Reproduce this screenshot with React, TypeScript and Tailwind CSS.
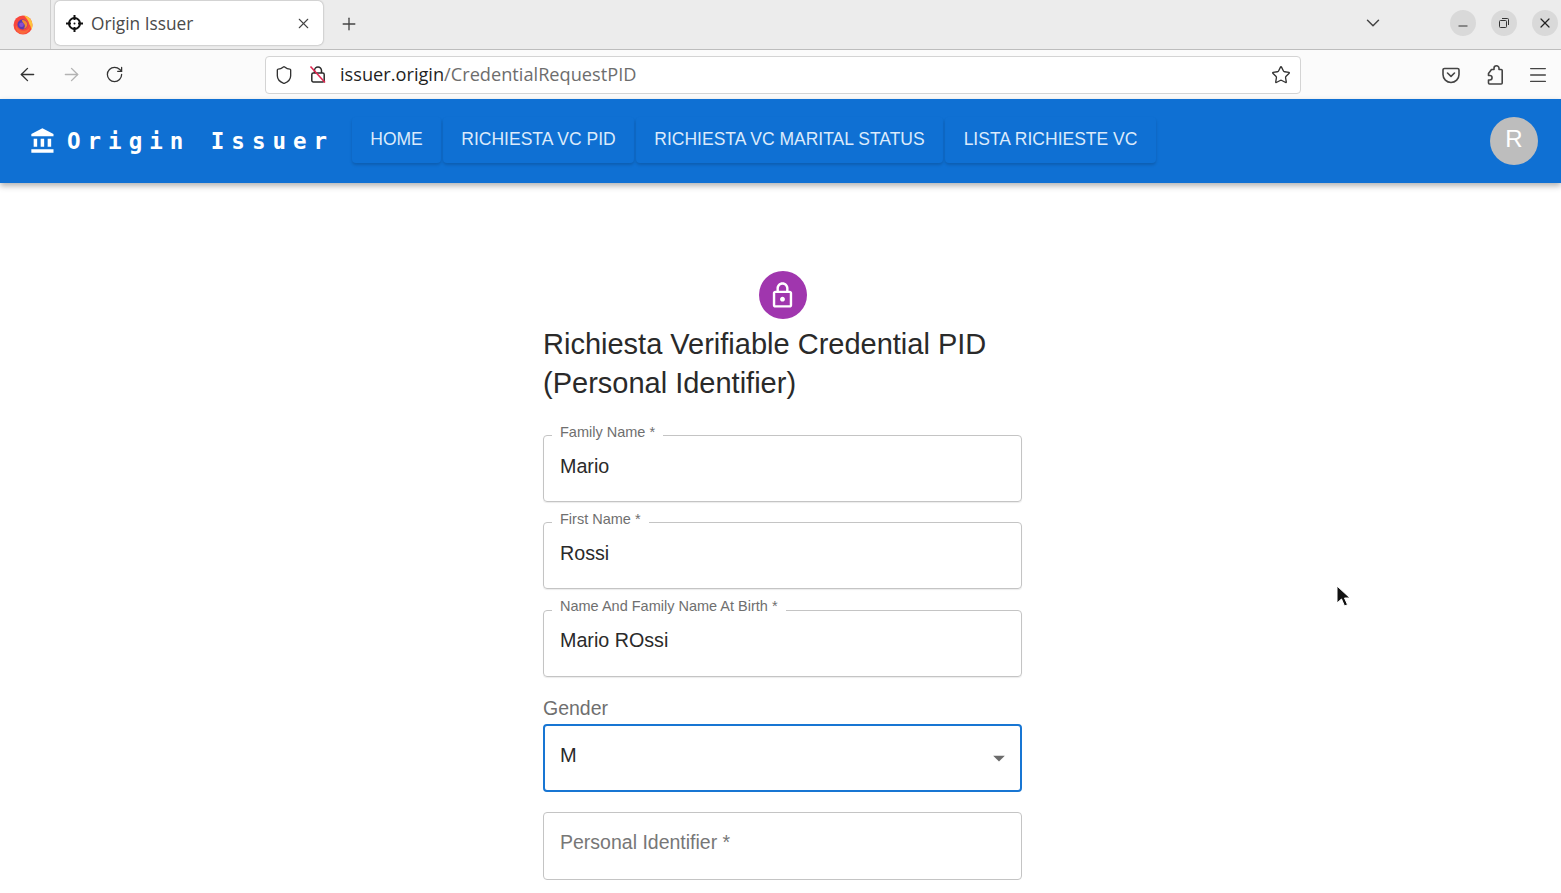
import React from 'react';
import { ArrowLeft, ArrowRight, RotateCw, Shield, Star, Menu, ChevronDown, Plus, X, Minus } from 'lucide-react';

const navItems = [
  { label: 'HOME', w: 'w-[89px]' },
  { label: 'RICHIESTA VC PID', w: 'w-[191px]' },
  { label: 'RICHIESTA VC MARITAL STATUS', w: 'w-[307px]' },
  { label: 'LISTA RICHIESTE VC', w: 'w-[211px]' },
];

function FirefoxLogo() {
  return (
    <svg width="20" height="20" viewBox="0 0 20 20">
      <circle cx="10" cy="10" r="9.500" fill="#f8463c" />
      <path d="M11 .5c4.500.4 8.500 4.300 8.500 9.500 0 2-.5 3.500-1.300 4.800-.2-2.200-.7-4-1.700-5.300C15.500 5.500 13.500 3 11 .5z" fill="#ffc23a" />
      <path d="M3 10c1.500 4.500 5.500 6.500 9.500 5.500 2-.5 3.500-2 4.500-4-.2 3.800-3.500 7.500-7.500 7.500S2 15 3 10z" fill="#f9673a" />
      <circle cx="9.500" cy="9.500" r="5" fill="#5b3bb0" />
      <path d="M9 5c2.500-.5 5 1.300 5.300 4 .3 2.500-1.500 4.500-3.800 4.800 1.500-1.300 1.800-3.300.7-4.800C10.300 7.800 9 7 9 5z" fill="#f58a2e" />
      <circle cx="8.500" cy="9.800" r="2.300" fill="#8a4fd0" />
    </svg>
  );
}

function Crosshair() {
  return (
    <svg width="17" height="17" viewBox="0 0 17 17" fill="none" stroke="#111" strokeWidth="2">
      <circle cx="8.500" cy="8.500" r="5.500" />
      <path d="M8.500 0v5M8.500 12v5M0 8.500h5M12 8.500h5" />
      <circle cx="8.500" cy="8.500" r="1" fill="#111" stroke="none" />
    </svg>
  );
}

function BrokenLock() {
  return (
    <svg width="18" height="19" viewBox="0 0 18 19" fill="none">
      <path d="M5.500 8V5.500a3.500 3.500 0 0 1 7 0V8" stroke="#2b2b2b" strokeWidth="1.500" />
      <rect x="2.800" y="8" width="12.400" height="9" rx="1.500" stroke="#2b2b2b" strokeWidth="1.500" />
      <path d="M1.500 1.500 16 17.500" stroke="#e0254f" strokeWidth="1.600" />
    </svg>
  );
}

function Pocket() {
  return (
    <svg width="18" height="18" viewBox="0 0 18 18" fill="none" stroke="#444" strokeWidth="1.600">
      <path d="M2.500 2.500h13a1.500 1.500 0 0 1 1.500 1.500v4.500a8 8 0 0 1-16 0V4a1.500 1.500 0 0 1 1.500-1.500z" />
      <path d="M5.500 7 9 10.300 12.500 7" strokeLinecap="round" strokeLinejoin="round" />
    </svg>
  );
}

function Extensions() {
  return (
    <svg width="18" height="20" viewBox="0 0 18 20" fill="none" stroke="#444" strokeWidth="1.600" strokeLinejoin="round">
      <path d="M8 4.500V3.300a2.500 2.500 0 0 1 5 0v1.200h2.200c.6 0 1 .4 1 1V18c0 .6-.4 1-1 1H3.500c-.6 0-1-.4-1-1v-3h1.300a2.200 2.200 0 0 0 0-4.500H2.500V8.500l3-4z" />
    </svg>
  );
}

function RestoreIcon() {
  return (
    <svg width="10" height="10" viewBox="0 0 10 10" fill="none" stroke="#333" strokeWidth="1">
      <rect x=".5" y="2.500" width="7" height="7" rx="1" />
      <path d="M3 .5h5.500a1 1 0 0 1 1 1V7" />
    </svg>
  );
}

function TextField({ label, value, low }: { label: string; value: string; low?: boolean }) {
  return (
    <div className={`relative h-[67px] rounded border border-[#c4c4c4] pl-4 shadow-[0_1px_1px_rgba(0,0,0,0.08)] ${low ? 'mt-px pt-[16px]' : 'pt-[17px]'}`}>
      <span className={`absolute left-[8px] bg-white px-2 text-[14.500px] leading-[20px] text-[#6f6f6f] ${low ? '-top-[15px]' : '-top-[14px]'}`}>{label}</span>
      <span className="text-[19.700px] leading-[27px] text-[#2a2a2a]">{value}</span>
    </div>
  );
}

export default function App() {
  return (
    <div className="relative flex h-[893px] w-full flex-col overflow-hidden bg-white font-['Liberation_Sans',sans-serif]">
      {/* tab strip */}
      <div className="flex h-[50px] flex-none items-center border-b border-[#bdbdbd] bg-[#ececec] pb-[3px]">
        <div className="flex h-[49px] w-[51px] flex-none items-center justify-center self-start border-r border-[#cfcfcf] pr-[5px]">
          <FirefoxLogo />
        </div>
        <div className="ml-1 flex h-[44px] w-[268px] flex-none items-center rounded-[5px] bg-white pl-[11px] pr-[11px] shadow-[0_0_2px_rgba(0,0,0,0.4)]">
          <Crosshair />
          <span className="ml-2 mt-[2px] font-['Open_Sans',sans-serif] text-[17.300px] text-[#4a4a4a]">Origin Issuer</span>
          <X size={17} strokeWidth={1.500} className="ml-auto text-[#444]" />
        </div>
        <Plus size={20} strokeWidth={1.600} className="ml-4 mt-[2px] text-[#444]" />
        <ChevronDown size={22} strokeWidth={1.600} className="ml-[1003px] text-[#444]" />
        <div className="ml-[66px] flex items-center gap-[15px]">
          <div className="flex h-[26px] w-[26px] items-center justify-center rounded-full bg-[#d9d9d9]">
            <Minus size={14} strokeWidth={1.700} className="mt-[5px] text-[#333]" />
          </div>
          <div className="flex h-[26px] w-[26px] items-center justify-center rounded-full bg-[#d9d9d9]">
            <RestoreIcon />
          </div>
          <div className="flex h-[26px] w-[26px] items-center justify-center rounded-full bg-[#d9d9d9]">
            <X size={16} strokeWidth={1.800} className="text-[#222]" />
          </div>
        </div>
      </div>

      {/* url bar */}
      <div className="flex h-[49px] flex-none items-center bg-[#fbfbfb]">
        <ArrowLeft size={21} strokeWidth={1.600} className="ml-[17px] text-[#333]" />
        <ArrowRight size={21} strokeWidth={1.600} className="ml-[23px] text-[#b3b3b3]" />
        <RotateCw size={19} strokeWidth={1.600} className="ml-[23px] text-[#333]" />
        <div className="ml-[141px] flex h-[38px] w-[1036px] flex-none items-center rounded border border-[#d4d4d4] bg-white pl-[8px] pr-[9px]">
          <Shield size={20} strokeWidth={1.600} className="text-[#333]" />
          <div className="ml-[15px]"><BrokenLock /></div>
          <span className="ml-[13px] font-['Open_Sans',sans-serif] text-[18.200px] text-[#1f1f1f]">
            issuer.origin<span className="text-[#6d6d6d]">/CredentialRequestPID</span>
          </span>
          <Star size={20} strokeWidth={1.600} className="ml-auto text-[#333]" />
        </div>
        <div className="ml-[141px]"><Pocket /></div>
        <div className="ml-[26px]"><Extensions /></div>
        <Menu size={22} strokeWidth={1.500} className="ml-[23px] text-[#444]" />
      </div>

      {/* app bar */}
      <header className="z-10 flex h-[84px] flex-none items-center bg-[#0f70d3] pl-[29px] pr-[23px] shadow-[0_3px_6px_rgba(0,0,0,0.3)]">
        <svg width="28" height="28" viewBox="0 0 24 24" fill="white" className="flex-none">
          <path d="M4 10v7h3v-7H4zm6 0v7h3v-7h-3zM2 22h19v-3H2v3zm14-12v7h3v-7h-3zm-4.500-9L2 6v2h19V6l-9.500-5z" />
        </svg>
        <span className="ml-[10px] mt-[2px] w-[285px] flex-none whitespace-nowrap font-['DejaVu_Sans_Mono',monospace] text-[22.500px] font-bold tracking-[7px] text-white">Origin Issuer</span>
        <nav className="-mt-[3px] flex gap-[2px]">
          {navItems.map((item) => (
            <div key={item.label} className={`${item.w} flex h-[46px] flex-none items-center justify-center rounded text-[17.500px] text-[#dbeafb] shadow-[0_2px_3px_rgba(0,0,0,0.16)]`}>
              {item.label}
            </div>
          ))}
        </nav>
        <div className="ml-auto flex h-[48px] w-[48px] items-center justify-center rounded-full bg-[#bdbdbd] pb-1 text-[24px] text-white">R</div>
      </header>

      {/* form */}
      <main className="flex flex-1 justify-center pl-1 pt-[88px]">
        <div className="flex w-[479px] flex-col">
          <div className="flex h-[48px] w-[48px] items-center justify-center self-center rounded-full bg-[#a036ae]">
            <svg width="29" height="29" viewBox="0 0 24 24" fill="white">
              <path d="M18 8h-1V6c0-2.760-2.240-5-5-5S7 3.240 7 6v2H6c-1.100 0-2 .9-2 2v10c0 1.100.9 2 2 2h12c1.100 0 2-.9 2-2V10c0-1.100-.9-2-2-2zM9 6c0-1.660 1.340-3 3-3s3 1.340 3 3v2H9V6zm9 14H6V10h12v10zm-6-3c1.100 0 2-.9 2-2s-.9-2-2-2-2 .9-2 2 .9 2 2 2z" />
            </svg>
          </div>
          <h1 className="mt-[6px] text-[29px] leading-[39px] text-[#2a2a2a]">
            Richiesta Verifiable Credential PID<br />(Personal Identifier)
          </h1>
          <div className="mt-[32px] flex flex-col gap-[20px]">
            <TextField label="Family Name *" value="Mario" />
            <TextField label="First Name *" value="Rossi" />
            <TextField label="Name And Family Name At Birth *" value="Mario ROssi" low />
          </div>
          <div className="mb-px mt-[17px] text-[19.500px] leading-[29px] text-[#6f6f6f]">Gender</div>
          <div className="flex h-[68px] flex-none items-center justify-between rounded border-2 border-[#1876d3] pb-[6px] pl-[15px] pr-[7px] text-[20px] text-[#2a2a2a]">
            M
            <svg width="28" height="28" viewBox="0 0 24 24" fill="#6b6b6b" className="mt-[6px]">
              <path d="M7 10l5 5 5-5z" />
            </svg>
          </div>
          <div className="mt-[20px] flex h-[68px] flex-none items-start rounded border border-[#c4c4c4] pl-4 pt-[16px] text-[19.500px] leading-[27px] text-[#777]">
            Personal Identifier *
          </div>
        </div>
      </main>

      {/* mouse pointer */}
      <svg width="16" height="24" viewBox="0 0 16 24" className="absolute left-[1335px] top-[585px]">
        <path d="M2 1v17l4.500-4 3 7 3-1.300-3-6.700H15z" fill="#111" stroke="white" strokeWidth="1" />
      </svg>
    </div>
  );
}
